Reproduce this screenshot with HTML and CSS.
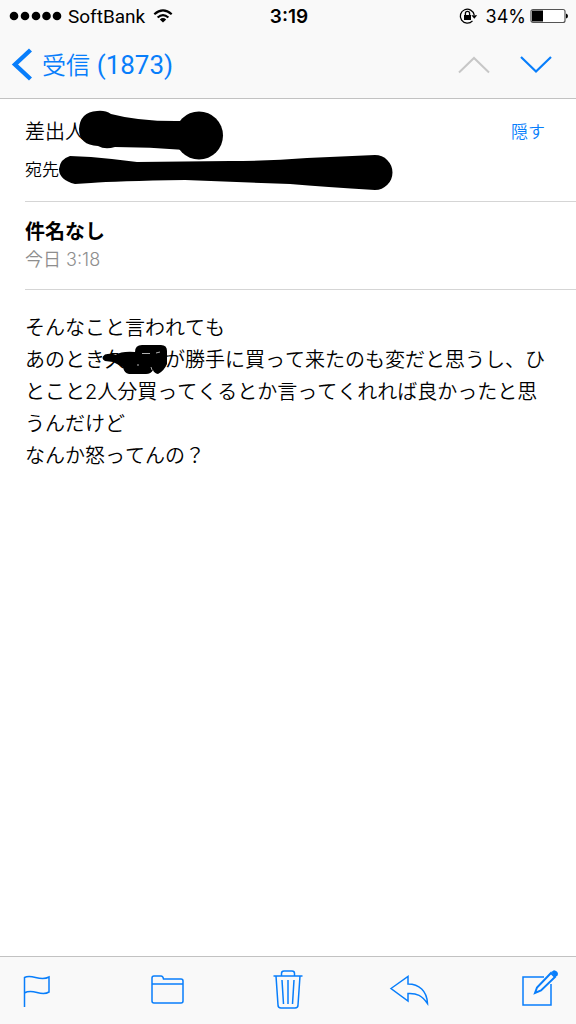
FILE: index.html
```html
<!DOCTYPE html>
<html lang="ja">
<head>
<meta charset="utf-8">
<meta name="viewport" content="width=device-width, initial-scale=1">
<title>受信</title>
<link rel="stylesheet" href="styles.css">
</head>
<body>
<div class="app">
  <header class="top">
    <div class="status">
      <div class="status-left">
        <svg width="52" height="12" viewBox="0 0 52 12" aria-hidden="true"><circle cx="4" cy="6" r="4.3"/><circle cx="15" cy="6" r="4.3"/><circle cx="26" cy="6" r="4.3"/><circle cx="36.5" cy="6" r="4.3"/><circle cx="47" cy="6" r="4.3"/></svg>
        <span class="carrier">SoftBank</span>
        <svg width="20" height="14" viewBox="0 0 20 14" aria-hidden="true"><g fill="none" stroke="#000" stroke-width="2.2"><path d="M1.3 5.2Q10-2.5 18.7 5.2"/><path d="M4.6 8.5Q10 3.6 15.4 8.5"/></g><path d="M6.8 10.4Q10 7.6 13.2 10.4L10 13.6Z"/></svg>
      </div>
      <time class="clock">3:19</time>
      <div class="status-right">
        <svg width="20" height="16" viewBox="0 0 20 16" aria-hidden="true"><path d="M13.5 12.9A7 7 0 1 1 15.2 7" fill="none" stroke="#000" stroke-width="1.3"/><path d="M12.4 7.2H18.2L15.3 10.8Z"/><rect x="5" y="7" width="7" height="5"/><path d="M6.4 7.5V5.5a2.1 2.1 0 0 1 4.2 0V7.5" fill="none" stroke="#000" stroke-width="1.3"/></svg>
        <span class="percent">34%</span>
        <svg width="38" height="16" viewBox="0 0 38 16" aria-hidden="true"><rect x="1" y="1.5" width="34" height="13" rx="2" fill="#fff" stroke="#555" stroke-width="1.2"/><rect x="2" y="2.5" width="11" height="11"/><path d="M36 5.5q2 .5 2 2.5t-2 2.5Z"/></svg>
      </div>
    </div>
    <nav class="nav">
      <button class="back" type="button">
        <svg width="20" height="32" viewBox="0 0 20 32" aria-hidden="true"><path d="M18.5 1L3 15.5L18.5 30" fill="none" stroke="currentColor" stroke-width="4.4"/></svg>
        <span>受信 <span class="count">(1873)</span></span>
      </button>
      <div class="steps">
        <button type="button" disabled aria-label="前のメッセージ"><svg width="32" height="18" viewBox="0 0 32 18"><path d="M1 16.5L16 2L31 16.5" fill="none" stroke="currentColor" stroke-width="2"/></svg></button>
        <button type="button" aria-label="次のメッセージ"><svg width="32" height="18" viewBox="0 0 32 18"><path d="M1 1L16 15.5L31 1" fill="none" stroke="currentColor" stroke-width="2.2"/></svg></button>
      </div>
    </nav>
  </header>

  <main class="mail">
    <section class="people">
      <div class="labels">
        <p class="from">差出人</p>
        <p class="to">宛先</p>
      </div>
      <button class="hide" type="button">隠す</button>
      <svg class="ink" width="368" height="92" viewBox="0 0 368 92" aria-hidden="true">
        <path d="M72 12Q80 11 86 15Q116 23 160 22V51Q125 48 90 48Q80 51 73 47Q54 46 54 30Q55 13 72 12Z"/>
        <circle cx="174" cy="36.5" r="24"/>
        <path d="M45 57L66 58Q90 60 112 63L205 62Q243 62 282 59L350 56A17.5 17.5 0 0 1 350 91Q300 88 265 85L160 81Q90 82 66 84L50 85Q34 81 34 70Q35 60 45 57Z"/>
      </svg>
    </section>
    <section class="subject">
      <h1>件名なし</h1>
      <time>今日 3:18</time>
    </section>
    <article class="body">そんなこと言われても<br>あのとき<span class="name">久<svg class="scribble" width="68" height="32" viewBox="0 0 68 32" aria-hidden="true"><path d="M4 10.5Q10 9 15 11Q20 7 34 8Q34 1 41 1H60Q66 1 66 7V20Q63 27 57 30Q53 29 52 26Q50 30 45 30H28Q23 29 22 23L12 18L4 17Q-1 14 4 10.5Z"/><path d="M41 9.5h8M55 9l4-1M36 21h2M50 23l1 3" fill="none" stroke="#ddd" stroke-width=".8"/></svg></span>が勝手に買って来たのも変だと思うし、ひとこと2人分買ってくるとか言ってくれれば良かったと思うんだけど<br>なんか怒ってんの？</article>
  </main>

  <footer class="tools">
    <button type="button" aria-label="フラグ"><svg width="28" height="40" viewBox="0 0 28 40"><path d="M1.5 36V6.5C9 2.5 17 11 26 6V21C18 26 10 17 1.5 22"/></svg></button>
    <button type="button" aria-label="フォルダ"><svg width="33" height="40" viewBox="0 0 33 40"><path d="M1 13H32M1 30V7Q1 5 3 5H10Q12 5 12.5 8H30Q32 8 32 10V30Q32 32 30 32H3Q1 32 1 30Z"/></svg></button>
    <button type="button" aria-label="ゴミ箱"><svg width="30" height="40" viewBox="0 0 30 40"><path d="M.5 5H29.5M8.5 5V2.5Q8.5 0 11 0H19Q21.5 0 21.5 2.5V5M3 5L5 34Q5 37 8 37H22Q25 37 25 34L27 5M9 9L10.5 33M15 9V33M21 9L19.5 33"/></svg></button>
    <button type="button" aria-label="返信"><svg width="38" height="40" viewBox="0 0 38 40"><path d="M1 17.5L18 5.5V13C29 13 37 20 37.5 32.5C32 24.5 27 22 18 22.5V30Z"/></svg></button>
    <button type="button" aria-label="作成"><svg width="36" height="40" viewBox="0 0 36 40"><path d="M22 6H1V34H29V13"/><path d="M13 22L15 16.5L29 2L33 6L19 19.5Z" stroke-width="2"/><path d="M30.5 1L32 0Q36 1 35 4L33.5 5Z" fill="currentColor"/></svg></button>
  </footer>
</div>
</body>
</html>
```
FILE: styles.css
```css
* {
  box-sizing: border-box;
}

body {
  margin: 0;
  background: #fff;
  color: #000;
  font-family: Inter, "Noto Sans CJK JP", sans-serif;
  font-kerning: none;
}

button {
  display: flex;
  align-items: center;
  padding: 0;
  border: 0;
  background: none;
  color: #087efb;
  font: inherit;
}

svg {
  display: block;
  flex: none;
  overflow: visible;
}

h1,
p {
  margin: 0;
}

.app {
  display: flex;
  flex-direction: column;
  min-height: 100vh;
}

.top {
  background: #f9f9f9;
  border-bottom: 1px solid #c2c2c2;
}

.status {
  display: grid;
  grid-template-columns: 1fr auto 1fr;
  align-items: center;
  height: 32px;
  padding: 0 8px 0 10px;
  font-family: Roboto, sans-serif;
  font-size: 19px;
}

.status-left,
.status-right {
  display: flex;
  align-items: center;
}

.status-left {
  gap: 8px;
}

.carrier {
  margin-left: -2px;
}

.status-right {
  justify-content: flex-end;
  gap: 4px;
}

.percent {
  margin-left: 3px;
  font-family: Inter, sans-serif;
  font-size: 18px;
}

.clock {
  font-family: Inter, sans-serif;
  font-size: 19px;
  font-weight: 600;
}

.nav {
  display: flex;
  align-items: center;
  justify-content: space-between;
  height: 66px;
  padding: 0 24px 0 12px;
}

.back {
  gap: 10px;
  font-size: 24px;
  font-weight: 350;
  line-height: 32px;
}

.count {
  font-family: Roboto, sans-serif;
  font-size: 26px;
  font-weight: 400;
}

.steps {
  display: flex;
  gap: 30px;
}

.steps button:disabled {
  color: #c7c7c7;
}

.mail {
  flex: 1;
  padding-left: 25px;
}

.people {
  position: relative;
  display: flex;
  align-items: flex-start;
  justify-content: space-between;
  padding: 16px 31px 14px 0;
  border-bottom: 1px solid #d5d5d5;
}

.labels {
  display: grid;
  gap: 4px;
}

.from {
  font-size: 20px;
  font-weight: 350;
  line-height: 34px;
}

.to {
  font-size: 17px;
  font-weight: 350;
  line-height: 34px;
}

.hide {
  font-size: 17px;
  font-weight: 350;
  line-height: 34px;
}

.ink {
  position: absolute;
  left: 0;
  top: 0;
}

.subject {
  padding: 16px 0;
  border-bottom: 1px solid #d5d5d5;
}

.subject h1 {
  font-size: 20px;
  font-weight: 700;
  line-height: 28px;
}

.subject time {
  display: block;
  color: #8e8e8e;
  font-size: 18px;
  font-weight: 350;
  line-height: 27px;
}

.body {
  padding: 22px 25px 20px 0;
  font-size: 20px;
  font-weight: 350;
  line-height: 32px;
}

.name {
  position: relative;
  display: inline-block;
  width: 60px;
}

.scribble {
  position: absolute;
  left: -4px;
  top: 0;
}

.tools {
  display: grid;
  grid-template-columns: 1fr 21% 21% 21% 1fr;
  align-items: center;
  justify-items: center;
  height: 68px;
  background: #f9f9f9;
  border-top: 1px solid #c2c2c2;
}

.tools button:first-child {
  justify-self: start;
  margin-left: 23px;
}

.tools button:last-child {
  justify-self: end;
  margin-right: 18px;
}

.tools svg {
  fill: none;
  stroke: currentColor;
  stroke-width: 1.5;
}
```
